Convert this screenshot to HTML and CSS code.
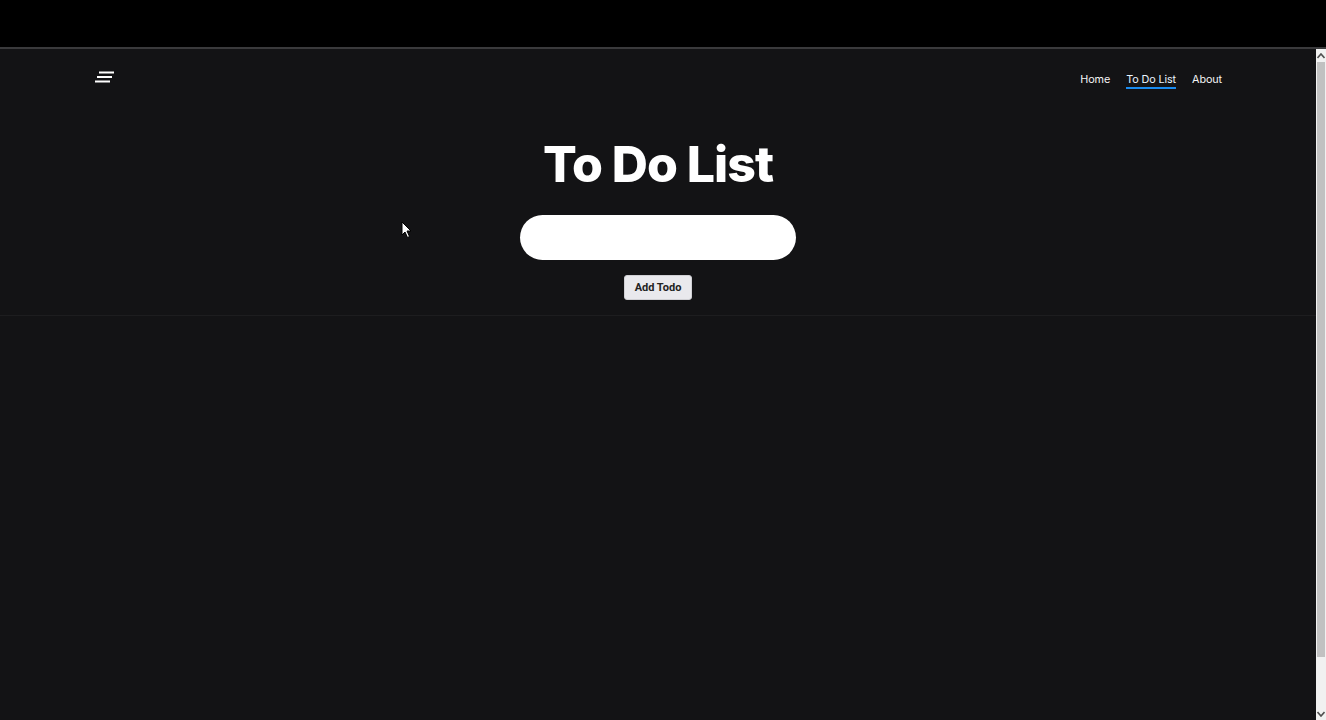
FILE: index.html
```html
<!DOCTYPE html>
<html lang="en">
<head>
<meta charset="utf-8">
<title>To Do List</title>
<link rel="stylesheet" href="styles.css">
</head>
<body>
<div class="topbar"></div>
<div class="viewport">
  <main class="page">
    <header class="hero">
      <nav class="nav">
        <svg class="menu-icon" width="20" height="12" viewBox="0 0 20 12" aria-label="menu">
          <rect x="4" y="0.5" width="15" height="2" fill="#fff"/>
          <rect x="2" y="5" width="15" height="2" fill="#fff"/>
          <rect x="0" y="9.5" width="15" height="2" fill="#fff"/>
        </svg>
        <ul class="links">
          <li><a href="#" class="link">Home</a></li>
          <li><a href="#" class="link active">To Do List</a></li>
          <li><a href="#" class="link">About</a></li>
        </ul>
      </nav>
      <h1 class="title">To Do List</h1>
      <form class="todo-form">
        <input class="todo-input" type="text" aria-label="todo">
        <button class="add-btn" type="button">Add Todo</button>
      </form>
    </header>
    <svg class="cursor" width="12" height="18" viewBox="0 0 12 18">
      <path d="M1 1 L1 14 L4 11 L6.5 16.5 L8.5 15.5 L6 10 L10 10 Z" fill="#fff" stroke="#000" stroke-width="1"/>
    </svg>
  </main>
  <div class="scrollbar">
    <div class="arrow up">
      <svg width="8" height="6" viewBox="0 0 8 6"><path d="M0.5 5 L4 1 L7.5 5" fill="none" stroke="#505050" stroke-width="1.6"/></svg>
    </div>
    <div class="thumb"></div>
    <div class="track"></div>
    <div class="arrow down">
      <svg width="8" height="6" viewBox="0 0 8 6"><path d="M0.5 1 L4 5 L7.5 1" fill="none" stroke="#505050" stroke-width="1.6"/></svg>
    </div>
  </div>
</div>
</body>
</html>
```
FILE: styles.css
```css
* { box-sizing: border-box; }
html, body { margin: 0; padding: 0; height: 100%; overflow: hidden; }
body { background: #000; font-family: Inter, "Noto Sans", sans-serif; }

.topbar {
  height: 49px;
  background: #000;
  border-top: 47px solid #000;
  border-bottom: 2px solid #3a3a3c;
}

.viewport {
  display: flex;
  height: 671px;
}

.page {
  flex: 1;
  background: #131315;
  position: relative;
}

.hero {
  padding: 0 94px;
  border-bottom: 1px solid #1d1d1f;
  height: 267px;
  display: flex;
  flex-direction: column;
  align-items: center;
}

.nav {
  width: 100%;
  display: flex;
  justify-content: space-between;
  align-items: center;
  height: 58px;
  padding-top: 1px;
}

.menu-icon { display: block; margin: 0 0 3px 1px; }

.links {
  list-style: none;
  margin: 0;
  padding: 0;
  display: flex;
  gap: 16px;
}

.link {
  color: #f4f4f4;
  text-decoration: none;
  font-size: 10.8px;
  letter-spacing: -0.1px;
  display: block;
  padding: 4px 0 1px;
  border-bottom: 2px solid transparent;
}

.link.active {
  color: #eaf4ff;
  border-bottom-color: #1a8cf0;
}

.title {
  margin: 27px 0 0;
  color: #fff;
  font-size: 50px;
  font-weight: 800;
  line-height: 60px;
  letter-spacing: -1px;
}

.todo-form {
  display: flex;
  flex-direction: column;
  align-items: center;
  gap: 15px;
  margin-top: 21px;
}

.todo-input {
  width: 276px;
  height: 45px;
  border: none;
  border-radius: 23px;
  background: #fff;
  outline: none;
}

.add-btn {
  width: 68px;
  height: 25px;
  border: 1px solid #d0d0d4;
  border-radius: 3px;
  background: #e9e9ed;
  color: #222;
  font-family: Roboto, sans-serif;
  font-weight: 700;
  font-size: 11px;
  padding: 0;
}

.cursor {
  position: absolute;
  left: 401px;
  top: 172px;
}

.scrollbar {
  width: 10px;
  display: flex;
  flex-direction: column;
  background: #f1f1f1;
}

.arrow {
  height: 13px;
  display: flex;
  align-items: center;
  justify-content: center;
}

.thumb {
  height: 595px;
  background: #c1c1c1;
  margin: 0 1px;
}

.track { flex: 1; }
```
